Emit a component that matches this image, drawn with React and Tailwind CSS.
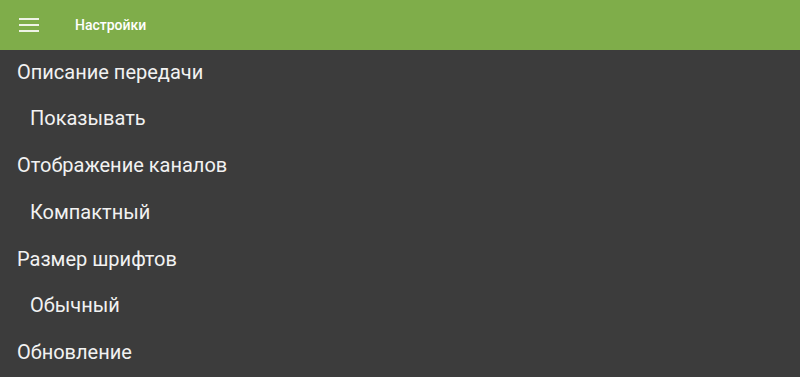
export default function App() {
  const items = [
    { t: "Описание передачи", sub: false },
    { t: "Показывать", sub: true },
    { t: "Отображение каналов", sub: false },
    { t: "Компактный", sub: true },
    { t: "Размер шрифтов", sub: false },
    { t: "Обычный", sub: true },
    { t: "Обновление", sub: false },
  ];
  return (
    <div className="w-[800px] h-[377px] overflow-hidden bg-[#3c3c3c] flex flex-col" style={{ fontFamily: "Roboto, 'Liberation Sans', sans-serif" }}>
      <div className="h-[50px] shrink-0 bg-[#7fad4a] flex items-center">
        <div className="ml-[19px] w-[20px] flex flex-col gap-[4px]">
          <div className="h-[2px] bg-[#eef3e6]" />
          <div className="h-[2px] bg-[#eef3e6]" />
          <div className="h-[2px] bg-[#eef3e6]" />
        </div>
        <div className="ml-[36px] text-white text-[14px] font-medium">Настройки</div>
      </div>
      <div className="flex flex-col -mt-[1.5px]">
        {items.map((it, i) => (
          <div key={i} className={`h-[46.8px] leading-[46.8px] text-[20px] text-[#f2f2f2] ${it.sub ? "pl-[30px]" : "pl-[17px]"}`}>
            {it.t}
          </div>
        ))}
      </div>
    </div>
  );
}
